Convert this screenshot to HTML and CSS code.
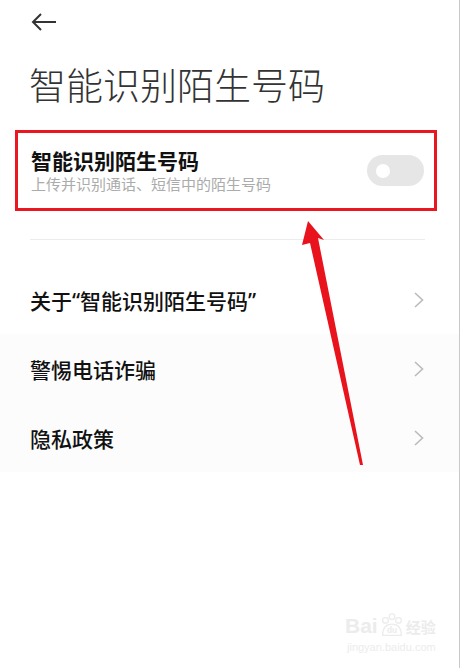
FILE: index.html
```html
<!DOCTYPE html>
<html lang="zh-CN">
<head>
    <meta charset="UTF-8">
    <meta name="viewport" content="width=device-width, initial-scale=1.0">
    <title>智能识别陌生号码</title>
    <link rel="stylesheet" href="styles.css">
</head>
<body>
    <div class="screen">
        <div class="topbar">
            <svg class="back" width="26" height="18" viewBox="0 0 26 18">
                <path d="M2 9 H25 M10 1 L2 9 L10 17" fill="none" stroke="#333" stroke-width="2"/>
            </svg>
        </div>

        <h1 class="page-title">智能识别陌生号码</h1>

        <div class="highlight">
            <div class="switch-row">
                <div class="switch-text">
                    <div class="switch-title">智能识别陌生号码</div>
                    <div class="switch-desc">上传并识别通话、短信中的陌生号码</div>
                </div>
                <div class="toggle"><span class="knob"></span></div>
            </div>
        </div>

        <div class="divider"></div>

        <div class="menu">
            <div class="menu-item">
                <span>关于“智能识别陌生号码”</span>
                <svg class="chevron" width="10" height="16" viewBox="0 0 10 16"><path d="M1 1 L8.5 8 L1 15" fill="none" stroke="#bbb" stroke-width="1.6"/></svg>
            </div>
            <div class="menu-group">
                <div class="menu-item">
                    <span>警惕电话诈骗</span>
                    <svg class="chevron" width="10" height="16" viewBox="0 0 10 16"><path d="M1 1 L8.5 8 L1 15" fill="none" stroke="#bbb" stroke-width="1.6"/></svg>
                </div>
                <div class="menu-item">
                    <span>隐私政策</span>
                    <svg class="chevron" width="10" height="16" viewBox="0 0 10 16"><path d="M1 1 L8.5 8 L1 15" fill="none" stroke="#bbb" stroke-width="1.6"/></svg>
                </div>
            </div>
        </div>
    </div>

    <!-- annotation arrow drawn over the screenshot -->
    <svg class="annotation" width="463" height="668" viewBox="0 0 463 668">
        <polygon points="308,221 324,240 318,238 363,465 360,465 310,243 302,245" fill="#e8131d"/>
    </svg>

    <div class="watermark">
        <div class="wm-logo">
            <span>Bai</span>
            <svg width="28" height="28" viewBox="0 0 30 30">
                <g fill="none" stroke="#ececec" stroke-width="1.4">
                    <circle cx="8" cy="9" r="3"/>
                    <circle cx="15" cy="5" r="3"/>
                    <circle cx="22" cy="9" r="3"/>
                    <path d="M5 25 Q5 13 15 13 Q25 13 25 25 Z"/>
                </g>
                <text x="15" y="23" font-size="9" fill="#ececec" text-anchor="middle" font-family="Liberation Sans, sans-serif">du</text>
            </svg>
            <span class="wm-cn">经验</span>
        </div>
        <div class="wm-url">jingyan.baidu.com</div>
    </div>
</body>
</html>
```

FILE: styles.css
```css
body {
    margin: 0;
    width: 463px;
    height: 668px;
    background-color: #fff;
    font-family: "Noto Sans CJK SC", "Noto Sans", sans-serif;
    position: relative;
    overflow: hidden;
}
.screen {
    width: 459px;
    height: 668px;
    border-right: 1px solid #c9c9c9;
    box-sizing: content-box;
}
.topbar {
    height: 44px;
    display: flex;
    align-items: center;
    padding-left: 31px;
}
.back {
    display: block;
}
.page-title {
    margin: 16px 0 0 29px;
    font-size: 37px;
    font-weight: 200;
    line-height: 48px;
    color: #333;
    letter-spacing: 0;
}
.highlight {
    margin: 22px 0 0 15px;
    width: 422px;
    height: 81px;
    border: 3px solid #ea1620;
    box-sizing: border-box;
}
.switch-row {
    display: flex;
    align-items: center;
    justify-content: space-between;
    height: 100%;
    padding: 0 10px 0 13px;
}
.switch-title {
    font-size: 21px;
    font-weight: 700;
    color: #111;
    line-height: 26px;
}
.switch-desc {
    font-size: 15px;
    color: #ababab;
    line-height: 20px;
    margin-top: 1px;
}
.toggle {
    width: 57px;
    height: 31px;
    border-radius: 16px;
    background-color: #e6e6e6;
    display: flex;
    align-items: center;
    padding-left: 9px;
    box-sizing: border-box;
}
.knob {
    width: 14px;
    height: 14px;
    border-radius: 50%;
    background-color: #fff;
}
.divider {
    margin: 28px 34px 0 30px;
    height: 1px;
    background-color: #ececec;
}
.menu {
    margin-top: 25px;
}
.menu-group {
    background-color: #fcfcfc;
}
.menu-item {
    height: 69px;
    display: flex;
    align-items: center;
    justify-content: space-between;
    padding: 0 35px 0 30px;
    font-family: "Noto Sans", "Noto Sans CJK SC", sans-serif;
    font-size: 21px;
    font-weight: 500;
    color: #111;
}
.chevron {
    display: block;
}
.annotation {
    position: absolute;
    left: 0;
    top: 0;
    pointer-events: none;
}
.watermark {
    position: absolute;
    left: 345px;
    top: 611px;
    color: #ececec;
    font-family: "Liberation Sans", sans-serif;
}
.wm-logo {
    display: flex;
    align-items: center;
    font-size: 21px;
    font-weight: 700;
    height: 30px;
}
.wm-cn {
    font-family: "Noto Sans CJK SC", sans-serif;
    font-size: 15px;
}
.wm-url {
    font-size: 11px;
    margin-left: 2px;
}
```
